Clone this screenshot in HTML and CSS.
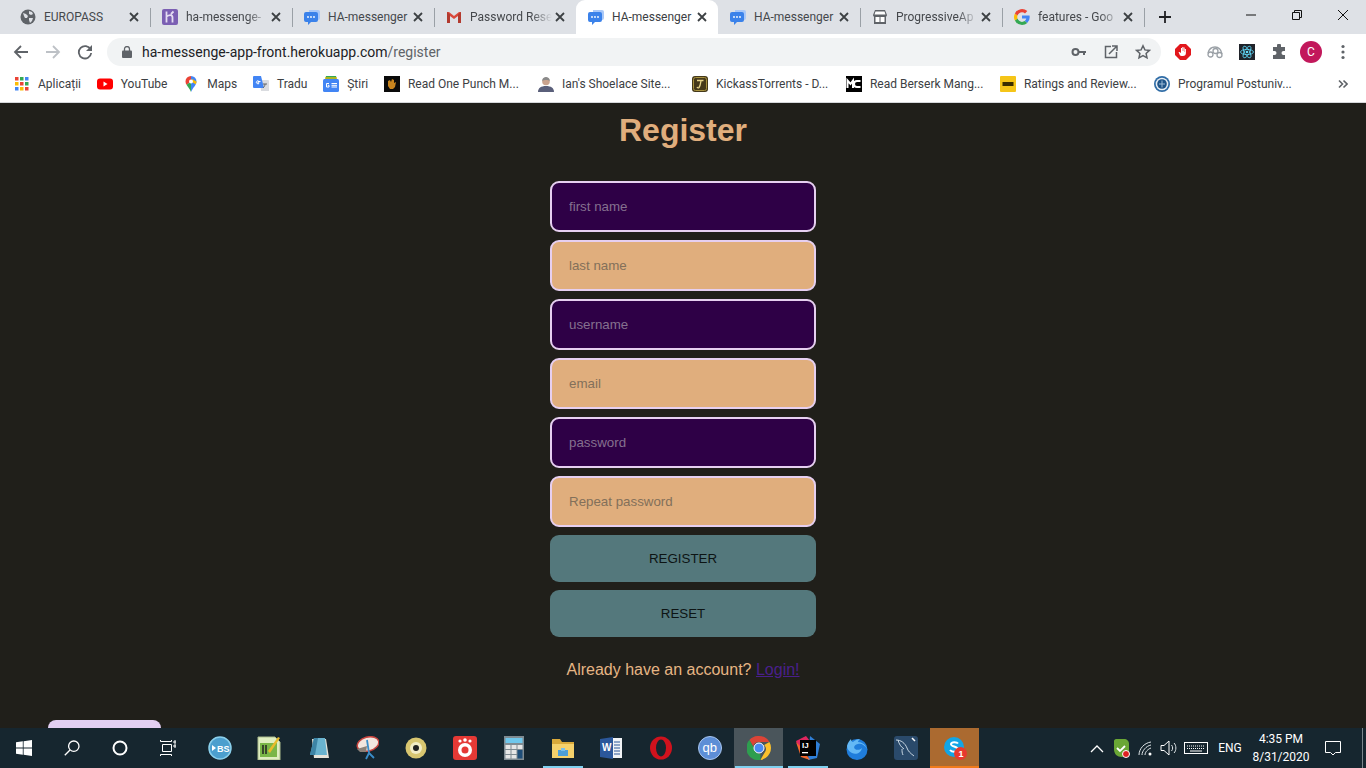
FILE: index.html
```html
<!DOCTYPE html>
<html lang="en">
<head>
    <meta charset="UTF-8">
    <meta name="viewport" content="width=device-width, initial-scale=1.0">
    <title>HA-messenger</title>
    <link rel="stylesheet" href="styles.css">
</head>
<body>
<svg class="defs" width="0" height="0">
    <symbol id="close" viewBox="0 0 12 12"><path d="M2 2l8 8M10 2l-8 8" stroke="#3c4043" stroke-width="1.8" fill="none"/></symbol>
    <symbol id="chat" viewBox="0 0 16 16"><path d="M5 1h9a2 2 0 0 1 2 2v6a2 2 0 0 1-2 2H5z" fill="#a9c8f8"/><path d="M2 3h10a2 2 0 0 1 2 2v6a2 2 0 0 1-2 2H7l-3 3v-3H2a2 2 0 0 1-2-2V5a2 2 0 0 1 2-2z" fill="#3b82ea"/><circle cx="4" cy="8" r=".9" fill="#fff"/><circle cx="7" cy="8" r=".9" fill="#fff"/><circle cx="10" cy="8" r=".9" fill="#fff"/></symbol>
</svg>

<!-- tabs -->
<div class="tabstrip">
    <div class="tab">
        <svg class="favicon" viewBox="0 0 16 16"><circle cx="8" cy="8" r="7.500" fill="#5f6368"/><path d="M3 4l3 1 2 2-1 2-2 0-1-2zM9 2l3 1 1 2-2 1-2-1zM9 9l4 0-1 3-2 2-1-3z" fill="#dee1e6"/></svg>
        <span class="tab-title">EUROPASS</span>
        <svg class="tab-close"><use href="#close"/></svg>
    </div>
    <div class="tab">
        <svg class="favicon" viewBox="0 0 16 16"><rect width="16" height="16" rx="2" fill="#7b5fb3"/><path d="M4.500 2.500v11M4.500 7.500c3-2 6-2 6 1v5M11.500 2.500l-2.500 2.500" stroke="#e4dcf2" stroke-width="1.800" fill="none"/></svg>
        <span class="tab-title tab-fade">ha-messenge-</span>
        <svg class="tab-close"><use href="#close"/></svg>
    </div>
    <div class="tab">
        <svg class="favicon"><use href="#chat"/></svg>
        <span class="tab-title">HA-messenger</span>
        <svg class="tab-close"><use href="#close"/></svg>
    </div>
    <div class="tab tab-nosep">
        <svg class="favicon" viewBox="0 0 16 16"><path d="M1 3v11h3V7l4 3 4-3v7h3V3h-2L8 7 3 3z" fill="#d9483b"/><path d="M1 3l3 2.500V14H1zM15 3l-3 2.500V14h3z" fill="#b23a2f"/></svg>
        <span class="tab-title tab-fade">Password Rese</span>
        <svg class="tab-close"><use href="#close"/></svg>
    </div>
    <div class="tab tab-active tab-nosep">
        <svg class="favicon"><use href="#chat"/></svg>
        <span class="tab-title">HA-messenger</span>
        <svg class="tab-close"><use href="#close"/></svg>
    </div>
    <div class="tab">
        <svg class="favicon"><use href="#chat"/></svg>
        <span class="tab-title">HA-messenger</span>
        <svg class="tab-close"><use href="#close"/></svg>
    </div>
    <div class="tab">
        <svg class="favicon" viewBox="0 0 16 16"><path d="M3 1h10l2 5a2 2 0 0 1-1 1.700V15H2V7.700A2 2 0 0 1 1 6z" fill="#5f6368"/><rect x="3.500" y="8" width="9" height="5" fill="#fff"/><path d="M3.500 2.500h9l1 3h-11z" fill="#fff"/><path d="M8 8v5" stroke="#5f6368"/></svg>
        <span class="tab-title tab-fade">ProgressiveAp</span>
        <svg class="tab-close"><use href="#close"/></svg>
    </div>
    <div class="tab">
        <svg class="favicon" viewBox="0 0 16 16"><path d="M15.700 8.200c0-.6-.1-1.100-.2-1.600H8v3h4.300a3.700 3.700 0 0 1-1.600 2.400l2.500 2a7.500 7.500 0 0 0 2.500-5.800z" fill="#4285f4"/><path d="M8 16c2.100 0 3.900-.7 5.200-1.900l-2.500-2c-.7.500-1.600.8-2.700.8-2.100 0-3.800-1.400-4.500-3.300L.9 11.600A8 8 0 0 0 8 16z" fill="#34a853"/><path d="M3.500 9.600a4.800 4.800 0 0 1 0-3.100L.9 4.400a8 8 0 0 0 0 7.200z" fill="#fbbc05"/><path d="M8 3.200c1.200 0 2.200.4 3 1.200l2.300-2.300A8 8 0 0 0 .9 4.400l2.600 2.100C4.200 4.600 5.900 3.200 8 3.200z" fill="#ea4335"/></svg>
        <span class="tab-title tab-fade">features - Goo</span>
        <svg class="tab-close"><use href="#close"/></svg>
    </div>
    <div class="tab-end">
        <svg class="new-tab" viewBox="0 0 12 12"><path d="M6 0v12M0 6h12" stroke="#202124" stroke-width="1.800"/></svg>
    </div>
    <div class="win-controls">
        <svg class="win-btn" viewBox="0 0 46 30"><path d="M18 15h10" stroke="#111" fill="none"/></svg>
        <svg class="win-btn" viewBox="0 0 46 30"><path d="M18.500 12.500h7v7h-7zM20.500 12.500v-2h7v7h-2" stroke="#111" fill="none"/></svg>
        <svg class="win-btn" viewBox="0 0 46 30"><path d="M18 10l10 10M28 10l-10 10" stroke="#111" fill="none"/></svg>
    </div>
</div>

<!-- address bar -->
<div class="toolbar">
    <svg class="nav-icon" viewBox="0 0 16 16"><path d="M15 8H2M8 2L2 8l6 6" stroke="#5f6368" stroke-width="1.800" fill="none"/></svg>
    <svg class="nav-icon" viewBox="0 0 16 16"><path d="M1 8h13M8 2l6 6-6 6" stroke="#bdc1c6" stroke-width="1.800" fill="none"/></svg>
    <svg class="nav-icon" viewBox="0 0 16 16"><path d="M13.600 5.500A6.200 6.200 0 1 0 14.200 9" stroke="#5f6368" stroke-width="1.800" fill="none"/><path d="M15 1v6H9z" fill="#5f6368"/></svg>
    <div class="omnibox">
        <svg class="lock" viewBox="0 0 10 12"><rect y="4.500" width="10" height="7.500" rx="1" fill="#5f6368"/><path d="M2.500 5V3a2.500 2.500 0 0 1 5 0v2" stroke="#5f6368" stroke-width="1.300" fill="none"/></svg>
        <span class="url">ha-messenge-app-front.herokuapp.com<span class="url-path">/register</span></span>
        <div class="omni-icons">
            <svg class="omni-icon" viewBox="0 0 16 16"><circle cx="4.500" cy="8" r="3" stroke="#5f6368" stroke-width="2" fill="none"/><path d="M7 7h8v2h-1v2h-2V9H7z" fill="#5f6368"/></svg>
            <svg class="omni-icon" viewBox="0 0 16 16"><path d="M8 2.500H2.500v11h11V8" stroke="#5f6368" stroke-width="1.500" fill="none"/><path d="M6 10l7.500-7.500M9 2h5v5" stroke="#5f6368" stroke-width="1.500" fill="none"/></svg>
            <svg class="omni-icon" viewBox="0 0 16 16"><path d="M8 1.800l1.900 4.100 4.500.5-3.300 3 .9 4.400L8 11.600l-4 2.200.9-4.400-3.300-3 4.500-.5z" stroke="#5f6368" stroke-width="1.500" fill="none"/></svg>
        </div>
    </div>
    <div class="extensions">
        <svg class="ext-icon" viewBox="0 0 16 16"><path d="M5 0h6l5 5v6l-5 5H5l-5-5V5z" fill="#e2171c"/><path d="M5 11.500L3.500 8l1 0L6 9V4h1v3h.3V3h1v4h.3V3.500h1V8h.3V5h1v4c0 2-1 3-3 3-1 0-1.600-.1-2.900-.5z" fill="#fff"/></svg>
        <svg class="ext-icon" viewBox="0 0 16 16"><g stroke="#9aa0a6" stroke-width="1.300" fill="none"><circle cx="3.500" cy="10.500" r="2.500"/><circle cx="8.500" cy="7" r="2.500"/><circle cx="12.500" cy="11" r="2.500"/><path d="M1 9c1-4 4-6 7-6s6 2 7 7"/></g></svg>
        <svg class="ext-icon" viewBox="0 0 16 16"><rect width="16" height="16" fill="#20232a"/><g stroke="#61dafb" stroke-width=".8" fill="none"><ellipse cx="8" cy="8" rx="6.500" ry="2.600"/><ellipse cx="8" cy="8" rx="6.500" ry="2.600" transform="rotate(60 8 8)"/><ellipse cx="8" cy="8" rx="6.500" ry="2.600" transform="rotate(120 8 8)"/></g><circle cx="8" cy="8" r="1.300" fill="#61dafb"/></svg>
        <svg class="ext-icon" viewBox="0 0 16 16"><path d="M6 1.500a2 2 0 0 1 4 0V3h4v4h-1.500a2 2 0 0 0 0 4H14v4H2v-4h1.500a2 2 0 0 0 0-4H2V3h4z" fill="#5f6368"/></svg>
        <span class="avatar">C</span>
        <svg class="dots" viewBox="0 0 4 16"><circle cx="2" cy="2.500" r="1.600" fill="#5f6368"/><circle cx="2" cy="8" r="1.600" fill="#5f6368"/><circle cx="2" cy="13.500" r="1.600" fill="#5f6368"/></svg>
    </div>
</div>

<!-- bookmarks -->
<div class="bookmarks">
    <div class="bm">
        <svg class="bm-icon" viewBox="0 0 16 16"><g><rect x="1" y="1" width="3.500" height="3.500" fill="#ea4335"/><rect x="6" y="1" width="3.500" height="3.500" fill="#34a853"/><rect x="11" y="1" width="3.500" height="3.500" fill="#4285f4"/><rect x="1" y="6" width="3.500" height="3.500" fill="#fbbc05"/><rect x="6" y="6" width="3.500" height="3.500" fill="#ea4335"/><rect x="11" y="6" width="3.500" height="3.500" fill="#34a853"/><rect x="1" y="11" width="3.500" height="3.500" fill="#4285f4"/><rect x="6" y="11" width="3.500" height="3.500" fill="#fbbc05"/><rect x="11" y="11" width="3.500" height="3.500" fill="#ea4335"/></g></svg>
        <span>Aplicații</span>
    </div>
    <div class="bm">
        <svg class="bm-icon" viewBox="0 0 16 16"><rect y="2.500" width="16" height="11" rx="3" fill="#f00"/><path d="M6.500 5.500l4 2.500-4 2.500z" fill="#fff"/></svg>
        <span>YouTube</span>
    </div>
    <div class="bm">
        <svg class="bm-icon" viewBox="0 0 16 16"><path d="M8 0a5.500 5.500 0 0 1 5.500 5.500c0 3.500-3.500 6-5.500 10.500z" fill="#4285f4"/><path d="M8 0a5.500 5.500 0 0 0-5.500 5.500c0 1.200.4 2.200 1 3.200L8 5.500z" fill="#ea4335"/><path d="M3.500 8.700C5 11 7 13 8 16V5.500z" fill="#34a853"/><path d="M9 3l4.500 2.500c0 1-.3 1.900-.8 2.800L8 5.500z" fill="#fbbc05"/><circle cx="8" cy="5.500" r="2" fill="#fff"/></svg>
        <span>Maps</span>
    </div>
    <div class="bm">
        <svg class="bm-icon" viewBox="0 0 16 16"><path d="M7 4h8a1 1 0 0 1 1 1v10H8z" fill="#dadce0"/><path d="M1 0h7l3 12H1a1 1 0 0 1-1-1V1a1 1 0 0 1 1-1z" fill="#4285f4"/><path d="M7.500 5.500H5V7h1.200a1.500 1.500 0 1 1-.6-2" stroke="#fff" fill="none"/><path d="M10 8h4M12 8c0 2-1 3-2 4" stroke="#5f6368" fill="none"/></svg>
        <span>Tradu</span>
    </div>
    <div class="bm">
        <svg class="bm-icon" viewBox="0 0 16 16"><path d="M3 0h10l1 4H2z" fill="#34a853"/><path d="M2 1h12v3H2z" fill="#fbbc05" opacity=".6"/><rect y="3" width="16" height="13" rx="1.500" fill="#4285f4"/><path d="M6 7.500H3.500v3.500H6V9.300H4.800M8.500 7.500H14M8.500 9.300H14M8.500 11H14" stroke="#fff" fill="none"/></svg>
        <span>Știri</span>
    </div>
    <div class="bm bm-long">
        <svg class="bm-icon" viewBox="0 0 16 16"><rect width="16" height="16" fill="#0a0a0a"/><path d="M4 5l2-1 1 2 1-3 2 1 0 3 2-1-1 5-2 2H6L4 10z" fill="#c8841e"/></svg>
        <span>Read One Punch M...</span>
    </div>
    <div class="bm bm-long">
        <svg class="bm-icon" viewBox="0 0 16 16"><path d="M0 16c0-4 3-6 8-6s8 2 8 6z" fill="#5a5f7a"/><circle cx="8" cy="5.500" r="3.800" fill="#c9a38e"/><path d="M4.200 5c0-3 2-4 3.800-4s3.800 1 3.800 4c-1-1.500-6.500-1.500-7.600 0z" fill="#8a8a8a"/></svg>
        <span>Ian's Shoelace Site...</span>
    </div>
    <div class="bm bm-long">
        <svg class="bm-icon" viewBox="0 0 16 16"><rect width="16" height="16" rx="3" fill="#45391a"/><rect x="1.500" y="1.500" width="13" height="13" rx="2" fill="none" stroke="#a8923f"/><path d="M5 4.500h6.500M9 4.500c-.5 3-.5 5-2 7-.5.500-1.500.5-2-.5" stroke="#e6d48a" stroke-width="1.300" fill="none"/></svg>
        <span>KickassTorrents - D...</span>
    </div>
    <div class="bm bm-long">
        <svg class="bm-icon" viewBox="0 0 16 16"><rect width="16" height="16" fill="#000"/><path d="M1.500 12V4.500L4.500 8l2.500-3.500V12M14.500 5H11a3 3 0 0 0 0 6h3.500" stroke="#fff" stroke-width="2" fill="none"/></svg>
        <span>Read Berserk Mang...</span>
    </div>
    <div class="bm bm-long">
        <svg class="bm-icon" viewBox="0 0 16 16"><rect width="16" height="16" rx="1" fill="#f5c518"/><rect x="2.500" y="6" width="11" height="4" fill="#3a2d00"/></svg>
        <span>Ratings and Review...</span>
    </div>
    <div class="bm bm-long">
        <svg class="bm-icon" viewBox="0 0 16 16"><circle cx="8" cy="8" r="8" fill="#2f6ca6"/><circle cx="8" cy="8" r="6.300" fill="#e8eef4"/><circle cx="8" cy="8" r="4.800" fill="#1f5488"/><path d="M8 4.500v7M5 8h6" stroke="#9fbcd8"/></svg>
        <span>Programul Postuniv...</span>
    </div>
    <svg class="bm-more" viewBox="0 0 10 10"><path d="M1 1.500L4.500 5 1 8.500M5.500 1.500L9 5 5.500 8.500" stroke="#5f6368" stroke-width="1.600" fill="none"/></svg>
</div>

<!-- the page itself -->
<main class="page">
    <h1 class="titlu">Register</h1>
    <form class="register-form">
        <input class="campo campo-dark" type="text" placeholder="first name">
        <input class="campo campo-light" type="text" placeholder="last name">
        <input class="campo campo-dark" type="text" placeholder="username">
        <input class="campo campo-light" type="text" placeholder="email">
        <input class="campo campo-dark" type="password" placeholder="password">
        <input class="campo campo-light" type="password" placeholder="Repeat password">
        <button class="boton" type="button">REGISTER</button>
        <button class="boton" type="reset">RESET</button>
    </form>
    <p class="login-text">Already have an account? <a href="#login">Login!</a></p>
    <div class="popup-peek"></div>
</main>

<!-- windows taskbar -->
<div class="taskbar">
    <div class="task-fixed">
        <svg class="sys-icon" viewBox="0 0 16 16"><path d="M0 2.300l6.800-1v6.300H0zM7.600 1.200L16 0v7.600H7.600zM0 8.400h6.800v6.300l-6.800-1zM7.600 8.400H16V16l-8.400-1.200z" fill="#fff"/></svg>
        <svg class="sys-icon" viewBox="0 0 16 16"><circle cx="9.800" cy="6.200" r="5.200" stroke="#fff" stroke-width="1.300" fill="none"/><path d="M6 10L.8 15.200" stroke="#fff" stroke-width="1.300"/></svg>
        <svg class="sys-icon" viewBox="0 0 16 16"><circle cx="8" cy="8" r="6.500" stroke="#fff" stroke-width="2" fill="none"/></svg>
        <svg class="sys-icon" viewBox="0 0 16 16"><path d="M.5 0v1.500h11V0M2.500 4.500h9v7h-9zM.5 16v-1.500h11V16M14 1h2v2h-2zM14 5h2v2h-2z" stroke="#fff" fill="none"/></svg>
    </div>
    <div class="task-apps">
        <div class="task-app"><svg class="app-icon" viewBox="0 0 24 24"><circle cx="12" cy="12" r="11" fill="#4c9fce" stroke="#8ad0ec" stroke-width="1.500"/><path d="M4 9l4 3-4 3z" fill="#fff"/><text x="9" y="16" class="app-text">BS</text></svg></div>
        <div class="task-app"><svg class="app-icon" viewBox="0 0 24 24"><path d="M1 1h17l5 5v18H1z" fill="#dfeec0" stroke="#a9b98b"/><rect x="3" y="7" width="17" height="14" fill="#7ab648"/><path d="M6 9v9M9 9v9" stroke="#222" stroke-width="1.500"/><path d="M11 15l10-14 2 1-10 15z" fill="#e8bb2c"/></svg></div>
        <div class="task-app"><svg class="app-icon" viewBox="0 0 24 24"><path d="M6 3h14l3 19H8z" fill="#e7e4da"/><path d="M8 2h11l2 17H4z" fill="#69b3cf"/><path d="M8 2l-4 17h5l3-17z" fill="#3d84a5"/></svg></div>
        <div class="task-app"><svg class="app-icon" viewBox="0 0 24 24"><ellipse cx="13" cy="8" rx="11" ry="7" transform="rotate(-15 13 8)" fill="#f2e6df" stroke="#c8453f" stroke-width="1.500"/><path d="M2 13l10-3-1 6H5z" fill="#8a8078"/><path d="M12 4l2 13M14 17l-3 6M14 17l5 5" stroke="#3a8dc9" stroke-width="1.800" fill="none"/></svg></div>
        <div class="task-app"><svg class="app-icon" viewBox="0 0 24 24"><circle cx="12" cy="12" r="10.500" fill="#d8c670"/><circle cx="12" cy="12" r="6" fill="#f3edc6"/><circle cx="12" cy="12" r="3" fill="#222"/></svg></div>
        <div class="task-app"><svg class="app-icon" viewBox="0 0 24 24"><rect width="24" height="24" rx="3" fill="#e53935"/><circle cx="12" cy="14" r="7" fill="#fff"/><circle cx="12" cy="14" r="3.500" fill="#e53935"/><circle cx="7" cy="5" r="1.600" fill="#fff"/><circle cx="12" cy="4" r="1.800" fill="#fff"/><circle cx="17" cy="5" r="1.600" fill="#fff"/></svg></div>
        <div class="task-app"><svg class="app-icon" viewBox="0 0 24 24"><rect x="2" width="20" height="24" fill="#7f8b92"/><rect x="3.500" y="2" width="17" height="5" fill="#6fc7ec"/><g fill="#e6e6e6"><rect x="3.500" y="9" width="5" height="4"/><rect x="9.500" y="9" width="5" height="4"/><rect x="3.500" y="14" width="5" height="4"/><rect x="9.500" y="14" width="5" height="4"/><rect x="3.500" y="19" width="5" height="3.500"/><rect x="9.500" y="19" width="5" height="3.500"/></g><rect x="15.500" y="9" width="5" height="4" fill="#e6e6e6"/><rect x="15.500" y="14" width="5" height="8.500" fill="#1f4e79"/></svg></div>
        <div class="task-app task-open"><svg class="app-icon" viewBox="0 0 24 24"><path d="M1 3h8l2 3h12v16H1z" fill="#d9a93a"/><path d="M1 8h22v14H1z" fill="#f5d16b"/><rect x="7" y="14" width="10" height="6" fill="#4d9fd8"/><rect x="10" y="12" width="4" height="3" fill="#7cc0ea"/></svg></div>
        <div class="task-app"><svg class="app-icon" viewBox="0 0 24 24"><path d="M8 2h14v20H8z" fill="#f1f3f6"/><path d="M14 6h6M14 9h6M14 12h6M14 15h6M14 18h6" stroke="#2b579a"/><path d="M0 3l13-2v22L0 21z" fill="#2b579a"/><text x="2" y="15" class="app-text app-word">W</text></svg></div>
        <div class="task-app"><svg class="app-icon" viewBox="0 0 24 24"><ellipse cx="12" cy="12" rx="11" ry="11.500" fill="#d0121d"/><ellipse cx="12" cy="12" rx="5" ry="8.500" fill="#16262f"/></svg></div>
        <div class="task-app"><svg class="app-icon" viewBox="0 0 24 24"><circle cx="12" cy="12" r="11.500" fill="#5d8ed6" stroke="#a9c6ef"/><text x="4.500" y="16" class="app-text app-qb">qb</text></svg></div>
        <div class="task-app task-active task-open"><svg class="app-icon" viewBox="0 0 24 24"><path d="M12 0a12 12 0 0 1 10.400 6H12a6 6 0 0 0-5.800 4.500L2.400 4A12 12 0 0 1 12 0z" fill="#db4437"/><path d="M22.400 6a12 12 0 0 1-9 17.900l4-7A6 6 0 0 0 17.200 9z" fill="#fbc02d"/><path d="M13.400 23.900A12 12 0 0 1 2.400 4l4.600 8a6 6 0 0 0 6.400 5.900z" fill="#2e9e4f"/><circle cx="12" cy="12" r="5" fill="#4a8af4" stroke="#fff"/></svg></div>
        <div class="task-app task-open"><svg class="app-icon" viewBox="0 0 24 24"><path d="M0 5l10-5 4 5-8 15z" fill="#e0265f"/><path d="M14 0l10 8-3 14-9 2z" fill="#2f7fd8"/><path d="M0 6l5 15 9 3-8-12z" fill="#f0662c"/><rect x="4" y="4" width="16" height="16" fill="#000"/><text x="6" y="12" class="app-text app-ij">IJ</text><rect x="6" y="16" width="6" height="1.300" fill="#fff"/></svg></div>
        <div class="task-app"><svg class="app-icon" viewBox="0 0 24 24"><circle cx="12" cy="13.500" r="10.500" fill="#1f7ddb"/><path d="M2 10C3 6 5 4 6 3c0 2 1 3 2 3 2-2 5-3 7-3-1 1-2 2-2 3 4 0 8 3 9 7C20 9 16 7 13 8c-3 .5-5 3-3 5 2 1.500 5 1 7-1-1 5-6 7-10 5-3-1.500-5-4-5-7z" fill="#63b8f5"/></svg></div>
        <div class="task-app"><svg class="app-icon" viewBox="0 0 24 24"><rect width="24" height="24" rx="3" fill="#2a4a6b"/><path d="M2 4c5 0 9 3 11 8 1 3 3 5 7 8M4 4c1 4 3 7 6 9M8 13c0 2 0 4 1 6" stroke="#d8e4ee" fill="none" stroke-width=".9"/><path d="M18 2l3 3" stroke="#fff" stroke-width="1.500"/></svg></div>
        <div class="task-app task-skype"><svg class="app-icon" viewBox="0 0 24 24"><circle cx="11" cy="11" r="10" fill="#12a5e6"/><path d="M15 7.500c-1-1.500-6.500-2-7 .5-.5 3 7 2 7 5.500 0 3-6 3-8 .5" stroke="#fff" stroke-width="2" fill="none"/><circle cx="17.500" cy="17.500" r="6.500" fill="#e8392f"/><text x="15.500" y="21" class="app-text">1</text></svg></div>
    </div>
    <div class="tray">
        <svg class="tray-item" viewBox="0 0 24 24"><path d="M6 16l6-6 6 6" stroke="#fff" stroke-width="1.300" fill="none"/></svg>
        <svg class="tray-item" viewBox="0 0 24 24"><path d="M5 5c0-1 1-2 2-2h8c3 0 5 2 5 5v6c0 4-3 7-7 7-5 0-8-3-8-8z" fill="#6aa735"/><path d="M8 12l3 3 5-5" stroke="#fff" stroke-width="1.800" fill="none"/><circle cx="17" cy="18" r="3.500" fill="#e02020" stroke="#fff"/></svg>
        <svg class="tray-item" viewBox="0 0 24 24"><g stroke="#dfe5e8" fill="none"><path d="M6 19c0-6 5-12 12-13"/><path d="M9 19c0-4 4-9 9-10"/><path d="M12 19c0-3 3-6 6-7"/></g><circle cx="17" cy="18" r="1.500" fill="#fff"/></svg>
        <svg class="tray-item tray-vol" viewBox="0 0 24 24"><path d="M5 9.500h3l5-4.500v14l-5-4.500H5z" stroke="#fff" fill="none"/><path d="M15.500 9c1.500 1.500 1.500 4.500 0 6M18 7c2.500 2.500 2.500 7.500 0 10" stroke="#dfe5e8" fill="none"/></svg>
        <svg class="tray-kb" viewBox="0 0 24 16"><rect x=".5" y="2.500" width="23" height="11" stroke="#fff" fill="none"/><path d="M3 6h18M3 8.500h18" stroke="#fff" stroke-dasharray="1 1"/><path d="M6 11h12" stroke="#fff"/></svg>
        <span class="tray-lang">ENG</span>
        <div class="clock"><span>4:35 PM</span><span>8/31/2020</span></div>
        <svg class="tray-notif" viewBox="0 0 16 16"><path d="M.5 1.500h15v11h-5l-2.500 2.500-2.500-2.500h-5z" stroke="#fff" fill="none"/></svg>
        <div class="show-desktop"></div>
    </div>
</div>
</body>
</html>
```

FILE: styles.css
```css
/**
* Browser frame + register page
*/
* {
    box-sizing: border-box;
}
html, body {
    margin: 0;
    height: 768px;
    overflow: hidden;
}
body {
    display: flex;
    flex-direction: column;
    font-family: Roboto, "Liberation Sans", sans-serif;
    background-color: #201f1a;
}
.defs {
    display: none;
}

/* tabs */
.tabstrip {
    display: flex;
    height: 34px;
    padding-left: 8px;
    background-color: #dee1e6;
}
.tab {
    position: relative;
    display: flex;
    align-items: center;
    width: 142px;
    height: 34px;
    padding: 0 10px 0 12px;
    font-size: 12px;
    color: #45484c;
}
.tab::after {
    content: "";
    position: absolute;
    right: -1px;
    top: 8px;
    width: 1px;
    height: 19px;
    background-color: #9aa0a6;
}
.tab-nosep::after {
    display: none;
}
.tab-active {
    border-radius: 9px 9px 0 0;
    background-color: #ffffff;
    color: #3c4043;
}
.favicon {
    flex: none;
    width: 16px;
    height: 16px;
    margin-right: 8px;
}
.tab-title {
    flex: 1;
    overflow: hidden;
    white-space: nowrap;
}
.tab-fade {
    -webkit-mask-image: linear-gradient(to right, #000 75%, transparent 100%);
}
.tab-close {
    flex: none;
    width: 12px;
    height: 12px;
    margin-left: 2px;
}
.tab-end {
    display: flex;
    align-items: center;
    padding-left: 15px;
    height: 34px;
}
.new-tab {
    width: 12px;
    height: 12px;
}
.win-controls {
    display: flex;
    margin-left: auto;
}
.win-btn {
    width: 46px;
    height: 30px;
}

/* address bar */
.toolbar {
    display: flex;
    align-items: center;
    height: 34px;
    padding: 2px 0 0 5px;
    background-color: #ffffff;
}
.nav-icon {
    width: 16px;
    height: 16px;
    margin: 0 8px;
}
.omnibox {
    display: flex;
    align-items: center;
    width: 1054px;
    height: 28px;
    margin-left: 6px;
    padding-left: 15px;
    border-radius: 14px;
    background-color: #f1f3f4;
}
.lock {
    width: 10px;
    height: 12px;
    margin-right: 10px;
}
.url {
    font-size: 14px;
    color: #202124;
}
.url-path {
    color: #5f6368;
}
.omni-icons {
    display: flex;
    gap: 16px;
    margin-left: auto;
    padding-right: 10px;
}
.omni-icon {
    width: 16px;
    height: 16px;
}
.extensions {
    display: flex;
    align-items: center;
    gap: 16px;
    margin-left: 14px;
}
.ext-icon {
    width: 16px;
    height: 16px;
}
.avatar {
    display: flex;
    align-items: center;
    justify-content: center;
    width: 22px;
    height: 22px;
    margin: 0 -3px;
    border-radius: 50%;
    background-color: #c2185b;
    color: #ffffff;
    font-size: 12px;
}
.dots {
    width: 4px;
    height: 16px;
    margin-left: 6px;
}

/* bookmarks */
.bookmarks {
    display: flex;
    align-items: center;
    height: 35px;
    padding: 0 0 2px 14px;
    border-bottom: 1px solid #d5d7da;
    background-color: #ffffff;
    font-size: 12px;
    color: #3c4043;
}
.bm {
    display: flex;
    flex: none;
    align-items: center;
    padding-right: 15.8px;
    white-space: nowrap;
}
.bm-long {
    width: 154px;
    padding-right: 0;
}
.bm-icon {
    flex: none;
    width: 16px;
    height: 16px;
    margin-right: 8px;
}
.bm-more {
    flex: none;
    width: 10px;
    height: 10px;
    margin-left: 30px;
}

/* register page */
.page {
    position: relative;
    flex: 1;
    display: flex;
    flex-direction: column;
    align-items: center;
    padding-top: 9px;
    background-color: #201f1a;
    font-family: "Liberation Sans", Arial, sans-serif;
}
.titlu {
    margin: 0 0 32px;
    font-size: 32px;
    font-weight: bold;
    color: #e0ae7d;
}
.register-form {
    display: flex;
    flex-direction: column;
    gap: 8px;
    width: 266px;
}
.campo {
    height: 51px;
    padding: 0 17px;
    border: 2px solid #e6cff0;
    border-radius: 9px;
    font-family: "Liberation Sans", Arial, sans-serif;
    font-size: 13.33px;
    outline: none;
}
.campo::placeholder {
    opacity: 1;
}
.campo-dark {
    background-color: #2e0046;
}
.campo-dark::placeholder {
    color: #85708f;
}
.campo-light {
    background-color: #e0ae7d;
}
.campo-light::placeholder {
    color: #83705a;
}
.boton {
    height: 47px;
    border: 0;
    border-radius: 9px;
    background-color: #54787c;
    color: #0d1414;
    font-family: "Liberation Sans", Arial, sans-serif;
    font-size: 13.33px;
}
.login-text {
    margin: 24px 0 0;
    font-size: 16px;
    color: #e6b584;
}
.login-text a {
    color: #4a1f8c;
}
.popup-peek {
    position: absolute;
    left: 48px;
    bottom: 0;
    width: 113px;
    height: 8px;
    border-radius: 8px 8px 0 0;
    background-color: #e2cff2;
}

/* windows taskbar */
.taskbar {
    display: flex;
    height: 40px;
    background-color: #16262f;
    color: #ffffff;
}
.task-fixed {
    display: flex;
    width: 195px;
    padding-right: 3px;
}
.sys-icon {
    width: 16px;
    height: 16px;
    margin: 12px 16px;
}
.task-apps {
    display: flex;
}
.task-app {
    display: flex;
    align-items: center;
    justify-content: center;
    width: 49px;
    height: 40px;
}
.task-open {
    background: linear-gradient(#7fd0ef, #7fd0ef) center bottom / 40px 2px no-repeat;
}
.task-active {
    background: linear-gradient(#7fd0ef, #7fd0ef) center bottom / 48px 2px no-repeat, #4a555b;
}
.task-skype {
    background-color: #ab6a30;
    box-shadow: inset 0 -2px 0 #f07a1c;
}
.app-icon {
    width: 24px;
    height: 24px;
}
.app-text {
    font-family: "Liberation Sans", sans-serif;
    font-size: 9px;
    font-weight: bold;
    fill: #ffffff;
}
.app-word {
    font-size: 10px;
}
.app-qb {
    font-size: 13px;
    font-weight: normal;
}
.app-ij {
    font-size: 8px;
}
.tray {
    display: flex;
    align-items: center;
    margin-left: auto;
}
.tray-item {
    width: 24px;
    height: 24px;
}
.tray-vol {
    margin-left: -1px;
}
.tray-kb {
    width: 24px;
    height: 16px;
    margin: 0 4px;
}
.tray-lang {
    width: 36px;
    text-align: center;
    font-size: 12px;
}
.clock {
    display: flex;
    flex-direction: column;
    align-items: center;
    width: 66px;
    font-size: 12px;
    line-height: 18px;
}
.tray-notif {
    width: 16px;
    height: 16px;
    margin: 0 12px 0 11px;
}
.show-desktop {
    width: 10px;
    height: 40px;
    margin-right: 3px;
    border-right: 1px solid #7b868c;
}
```
